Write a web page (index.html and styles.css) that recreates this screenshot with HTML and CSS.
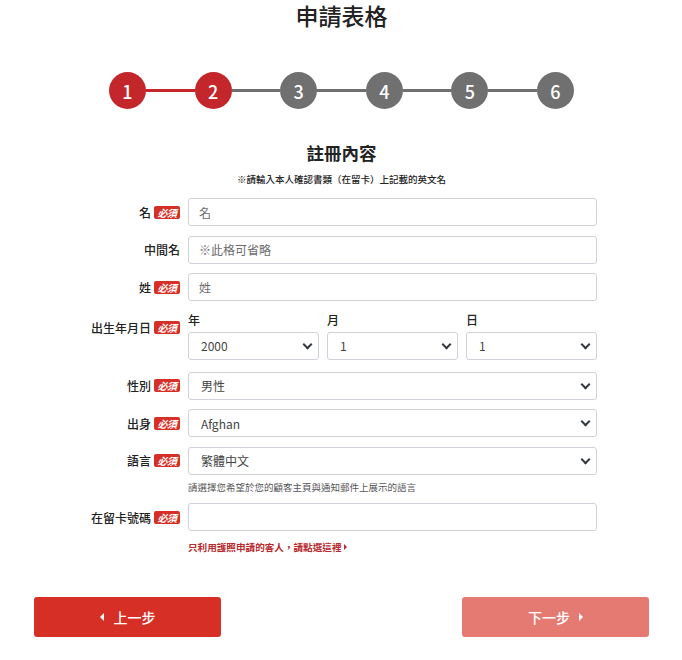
FILE: index.html
```html
<!DOCTYPE html>
<html lang="zh-Hant">
<head>
    <meta charset="UTF-8">
    <meta name="viewport" content="width=device-width, initial-scale=1.0">
    <title>申請表格</title>
    <link rel="stylesheet" href="styles.css">
</head>
<body>
    <div class="page">
        <h1 class="title">申請表格</h1>

        <div class="steps">
            <span class="step active">1</span>
            <span class="bar active"></span>
            <span class="step active">2</span>
            <span class="bar"></span>
            <span class="step">3</span>
            <span class="bar"></span>
            <span class="step">4</span>
            <span class="bar"></span>
            <span class="step">5</span>
            <span class="bar"></span>
            <span class="step">6</span>
        </div>

        <h2 class="section-title">註冊內容</h2>
        <p class="note">※請輸入本人確認書類（在留卡）上記載的英文名</p>

        <form class="form">
            <div class="row">
                <label class="row-label">名<span class="req">必須</span></label>
                <div class="field"><input class="input" type="text" placeholder="名"></div>
            </div>
            <div class="row">
                <label class="row-label">中間名</label>
                <div class="field"><input class="input" type="text" placeholder="※此格可省略"></div>
            </div>
            <div class="row">
                <label class="row-label">姓<span class="req">必須</span></label>
                <div class="field"><input class="input" type="text" placeholder="姓"></div>
            </div>
            <div class="row row-date">
                <label class="row-label">出生年月日<span class="req">必須</span></label>
                <div class="field date-grid">
                    <div class="date-col">
                        <span class="sub-label">年</span>
                        <div class="select"><select><option>2000</option></select></div>
                    </div>
                    <div class="date-col">
                        <span class="sub-label">月</span>
                        <div class="select"><select><option>1</option></select></div>
                    </div>
                    <div class="date-col">
                        <span class="sub-label">日</span>
                        <div class="select"><select><option>1</option></select></div>
                    </div>
                </div>
            </div>
            <div class="row">
                <label class="row-label">性別<span class="req">必須</span></label>
                <div class="field"><div class="select"><select><option>男性</option><option>女性</option></select></div></div>
            </div>
            <div class="row">
                <label class="row-label">出身<span class="req">必須</span></label>
                <div class="field"><div class="select"><select><option>Afghan</option></select></div></div>
            </div>
            <div class="row">
                <label class="row-label">語言<span class="req">必須</span></label>
                <div class="field">
                    <div class="select"><select><option>繁體中文</option></select></div>
                    <p class="hint">請選擇您希望於您的顧客主頁與通知郵件上展示的語言</p>
                </div>
            </div>
            <div class="row">
                <label class="row-label">在留卡號碼<span class="req">必須</span></label>
                <div class="field">
                    <input class="input" type="text">
                    <a class="passport-link" href="#">只利用護照申請的客人，請點選這裡<span class="arrow-right small"></span></a>
                </div>
            </div>
        </form>

        <div class="actions">
            <button class="btn btn-prev" type="button"><span class="arrow-left"></span>上一步</button>
            <button class="btn btn-next" type="button">下一步<span class="arrow-right"></span></button>
        </div>
    </div>
</body>
</html>
```

FILE: styles.css
```css
body {
    margin: 0;
    padding: 0;
    background-color: #fff;
    color: #222;
    font-family: "Noto Sans CJK TC", "Noto Sans", sans-serif;
}
.page {
    padding: 0 33px 0 34px;
}
.title {
    margin: 0;
    font-size: 23px;
    line-height: 30px;
    font-weight: 500;
    text-align: center;
}

/* step indicator */
.steps {
    width: 465px;
    margin: 42px auto 0;
    display: flex;
    align-items: center;
}
.step {
    width: 37px;
    height: 37px;
    border-radius: 50%;
    background-color: #707070;
    color: #fff;
    font-size: 18px;
    font-weight: 500;
    display: flex;
    align-items: center;
    justify-content: center;
    flex-shrink: 0;
}
.step.active {
    background-color: #c3272b;
}
.bar {
    flex: 1;
    height: 3px;
    background-color: #6f6f6f;
}
.bar.active {
    background-color: #c3272b;
}

.section-title {
    margin: 32px 0 0;
    font-size: 17.5px;
    line-height: 24px;
    font-weight: 700;
    text-align: center;
}
.note {
    margin: 7px 0 0;
    font-size: 9.5px;
    line-height: 14px;
    font-weight: 500;
    text-align: center;
}

/* form */
.form {
    margin-top: 12px;
}
.row {
    display: grid;
    grid-template-columns: 146px 409px;
    column-gap: 8px;
    align-items: start;
}
.row + .row {
    margin-top: 9.5px;
}
.row-label {
    display: flex;
    align-items: center;
    justify-content: flex-end;
    height: 28px;
    font-size: 12px;
    font-weight: 500;
}
.req {
    margin-left: 3px;
    width: 26px;
    height: 13px;
    border-radius: 2px;
    background-color: #d63026;
    color: #fff;
    font-size: 10px;
    font-style: italic;
    font-weight: 700;
    line-height: 13px;
    text-align: center;
    letter-spacing: -0.5px;
}
.input,
.select select {
    box-sizing: border-box;
    width: 100%;
    height: 28px;
    margin: 0;
    border: 1px solid #cfd2da;
    border-radius: 3px;
    background-color: #fff;
    font-family: inherit;
    font-size: 12px;
    color: #444;
    outline: none;
}
.input {
    padding: 0 10px;
    display: block;
}
.input::placeholder {
    color: #6c6c6c;
}
.select {
    position: relative;
}
.select select {
    display: block;
    padding: 0 24px 0 12px;
    appearance: none;
    -webkit-appearance: none;
}
.select::after {
    content: "";
    position: absolute;
    right: 8px;
    top: 9px;
    width: 5px;
    height: 5px;
    border-right: 2px solid #343a40;
    border-bottom: 2px solid #343a40;
    transform: rotate(45deg);
    pointer-events: none;
}

.row-date .row-label {
    padding-top: 3px;
}
.row-date + .row {
    margin-top: 12px;
}
.date-grid {
    display: grid;
    grid-template-columns: repeat(3, 1fr);
    column-gap: 8px;
}
.sub-label {
    display: block;
    height: 16px;
    margin-top: 1px;
    margin-bottom: 4px;
    font-size: 12px;
    line-height: 16px;
    font-weight: 500;
}

.hint {
    margin: 5px 0 0;
    font-size: 9.5px;
    line-height: 14px;
    color: #555;
}
.passport-link {
    display: block;
    margin-top: 9px;
    font-size: 9.6px;
    line-height: 14px;
    font-weight: 700;
    color: #b82a2e;
    text-decoration: none;
}

/* bottom buttons */
.actions {
    margin-top: 43px;
    display: flex;
    justify-content: space-between;
}
.btn {
    width: 187px;
    height: 40px;
    border: none;
    border-radius: 3px;
    color: #fff;
    font-family: inherit;
    font-size: 14px;
    font-weight: 500;
    display: flex;
    align-items: center;
    justify-content: center;
}
.btn-prev {
    background-color: #d63026;
}
.btn-next {
    background-color: #e57a73;
}
.arrow-left,
.arrow-right {
    display: inline-block;
    width: 0;
    height: 0;
    border-top: 4px solid transparent;
    border-bottom: 4px solid transparent;
}
.arrow-left {
    border-right: 4px solid #fff;
    margin-right: 10px;
}
.arrow-right {
    border-left: 4px solid #fff;
    margin-left: 9px;
}
.arrow-right.small {
    border-top-width: 3px;
    border-bottom-width: 3px;
    border-left: 3px solid #b82a2e;
    margin-left: 2px;
    vertical-align: 1px;
}
```
